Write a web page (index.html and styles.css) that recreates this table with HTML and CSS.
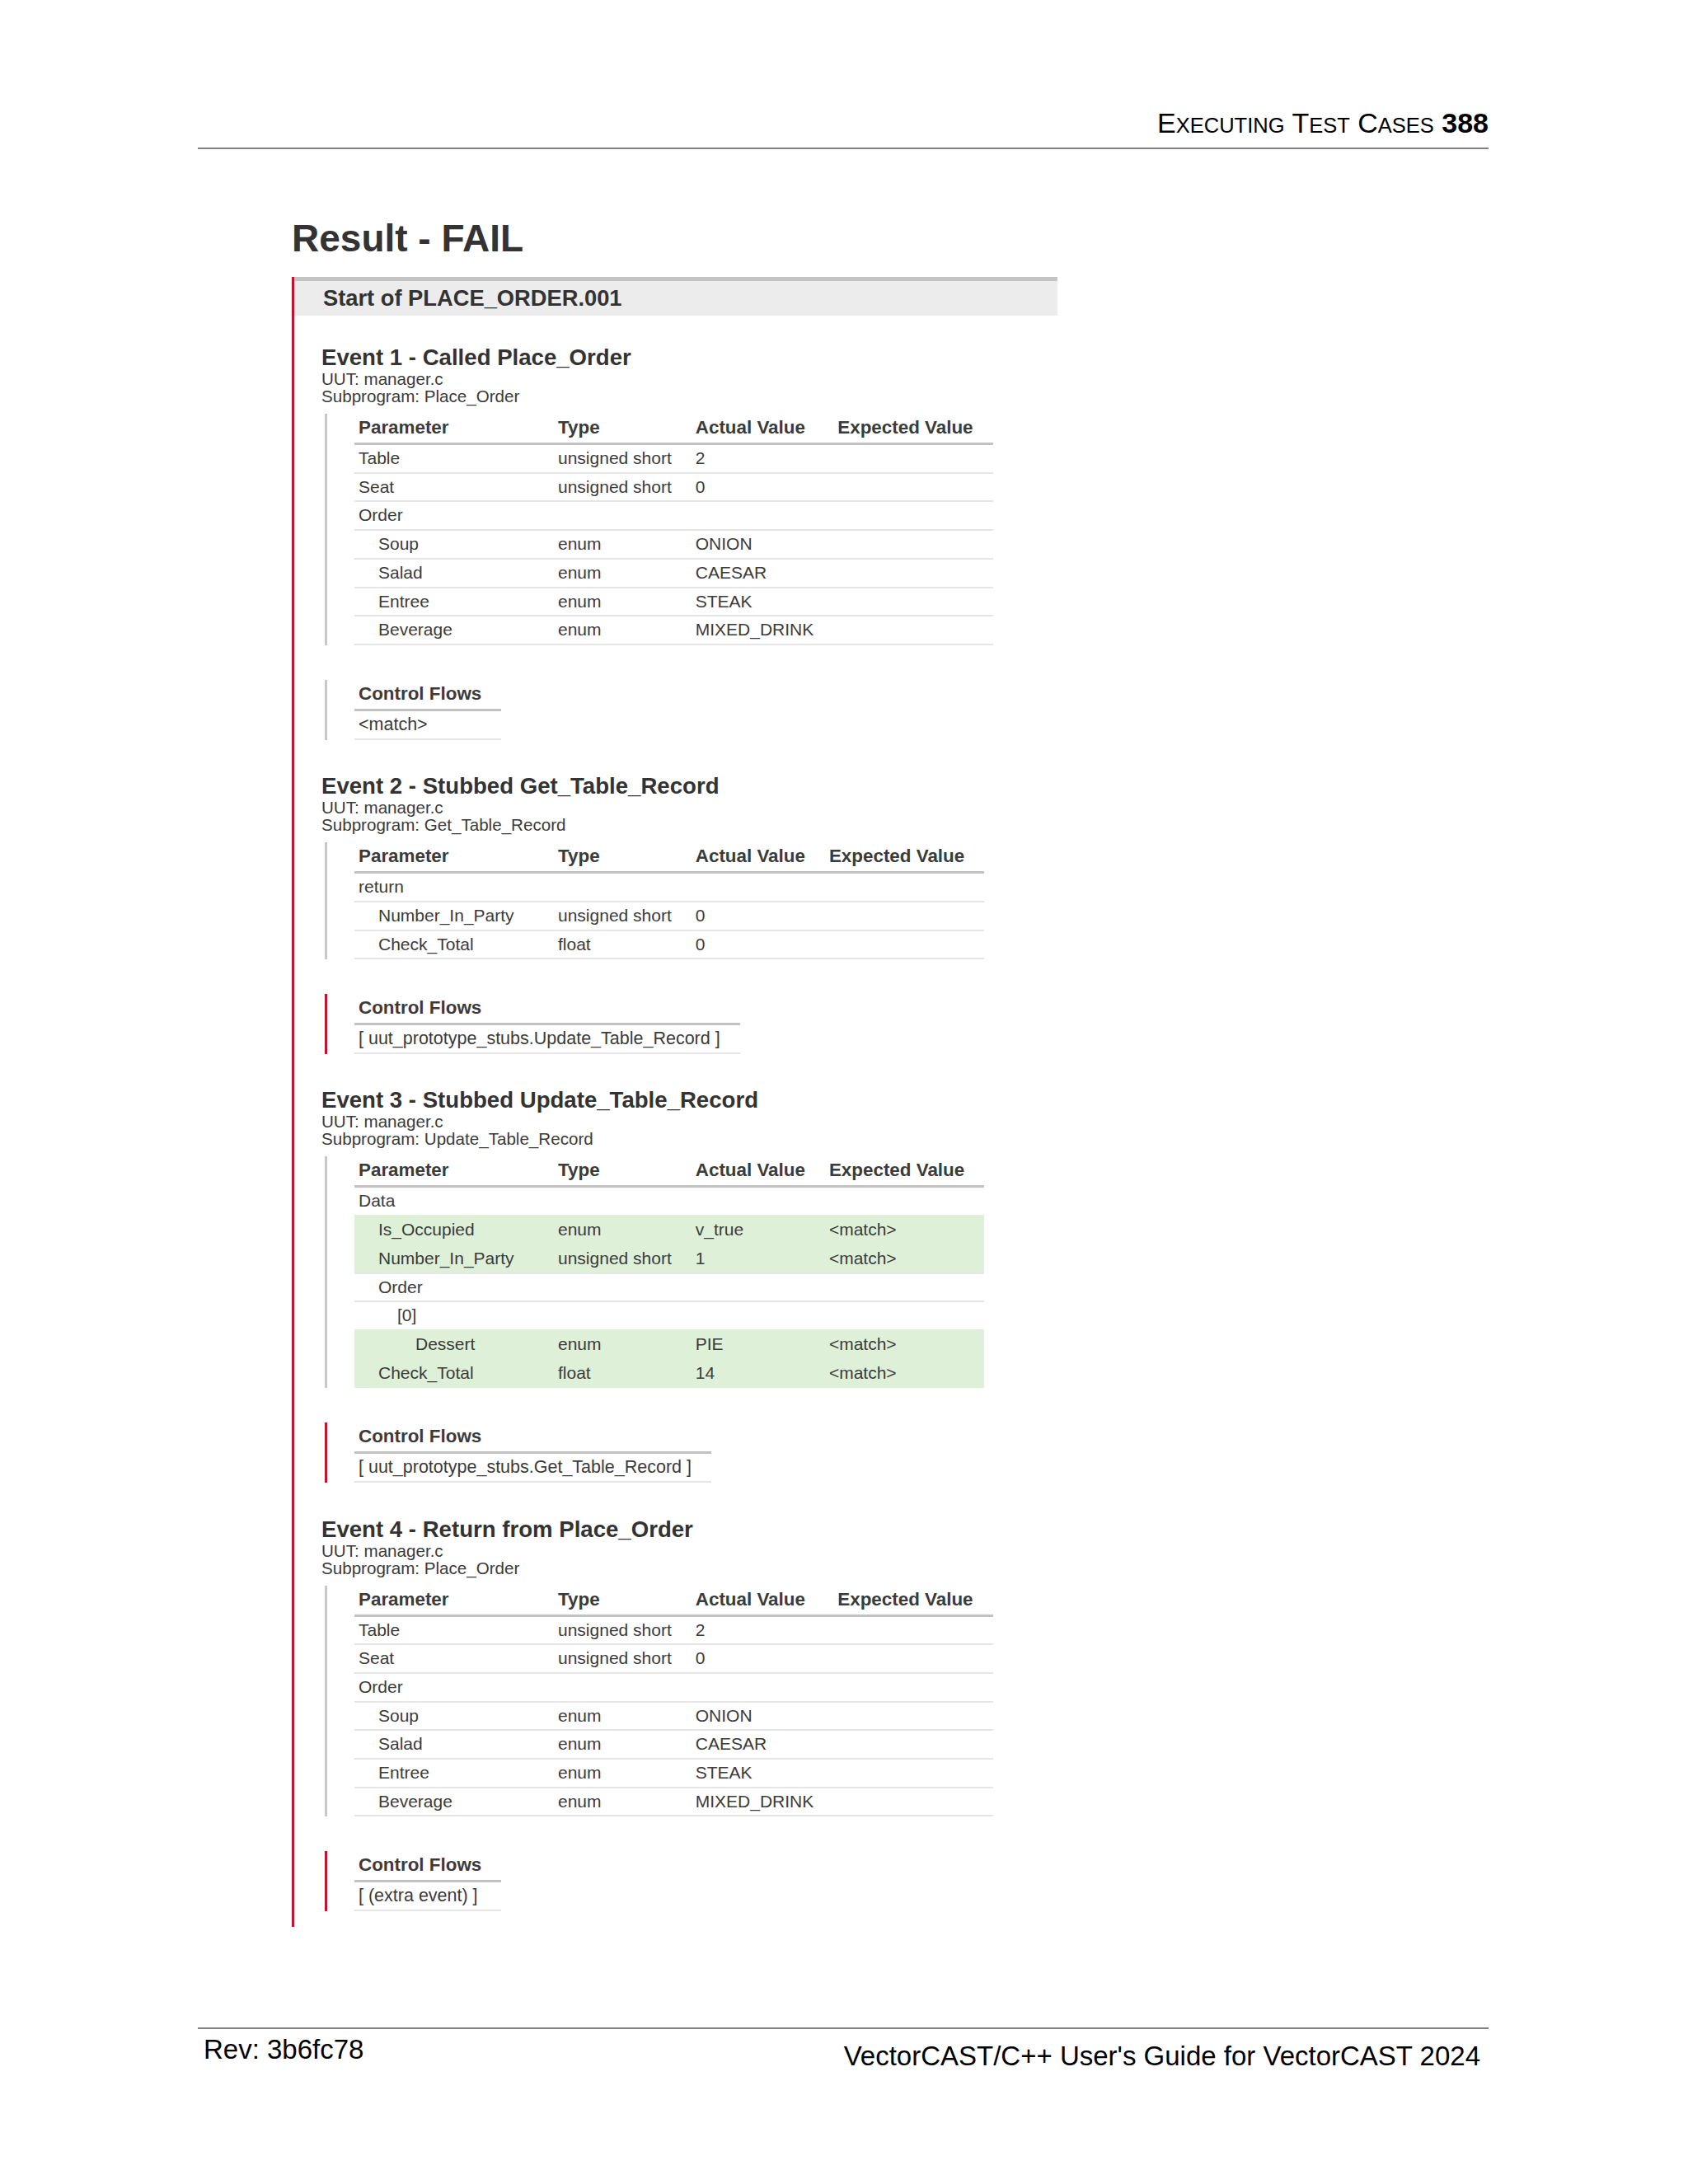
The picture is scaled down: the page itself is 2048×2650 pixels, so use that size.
FILE: index.html
```html
<!DOCTYPE html>
<html lang="en">
<head>
<meta charset="utf-8">
<title>Executing Test Cases 388</title>
<link rel="stylesheet" href="styles.css">
</head>
<body>
<div class="page">
  <header class="running-head"><span class="big">E</span><span class="sc">XECUTING</span> <span class="big">T</span><span class="sc">EST</span> <span class="big">C</span><span class="sc">ASES</span> <b>388</b></header>

  <main class="report">
    <h1 class="result">Result - FAIL</h1>

    <section class="testcase">
      <div class="tc-title">Start of PLACE_ORDER.001</div>

      <div class="event">
        <h2>Event 1 - Called Place_Order</h2>
        <div class="meta">UUT: manager.c</div>
        <div class="meta">Subprogram: Place_Order</div>
        <div class="tbl-wrap">
          <table class="params">
            <thead><tr><th class="c-param">Parameter</th><th>Type</th><th>Actual Value</th><th>Expected Value</th></tr></thead>
            <tbody>
              <tr><td>Table</td><td>unsigned short</td><td>2</td><td></td></tr>
              <tr><td>Seat</td><td>unsigned short</td><td>0</td><td></td></tr>
              <tr><td>Order</td><td></td><td></td><td></td></tr>
              <tr class="l1"><td>Soup</td><td>enum</td><td>ONION</td><td></td></tr>
              <tr class="l1"><td>Salad</td><td>enum</td><td>CAESAR</td><td></td></tr>
              <tr class="l1"><td>Entree</td><td>enum</td><td>STEAK</td><td></td></tr>
              <tr class="l1"><td>Beverage</td><td>enum</td><td>MIXED_DRINK</td><td></td></tr>
            </tbody>
          </table>
        </div>
        <div class="tbl-wrap cf">
          <table class="flows">
            <thead><tr><th>Control Flows</th></tr></thead>
            <tbody><tr><td>&lt;match&gt;</td></tr></tbody>
          </table>
        </div>
      </div>

      <div class="event">
        <h2>Event 2 - Stubbed Get_Table_Record</h2>
        <div class="meta">UUT: manager.c</div>
        <div class="meta">Subprogram: Get_Table_Record</div>
        <div class="tbl-wrap">
          <table class="params">
            <thead><tr><th class="c-param">Parameter</th><th>Type</th><th>Actual Value</th><th>Expected Value</th></tr></thead>
            <tbody>
              <tr><td>return</td><td></td><td></td><td></td></tr>
              <tr class="l1"><td>Number_In_Party</td><td>unsigned short</td><td>0</td><td></td></tr>
              <tr class="l1"><td>Check_Total</td><td>float</td><td>0</td><td></td></tr>
            </tbody>
          </table>
        </div>
        <div class="tbl-wrap cf bad">
          <table class="flows">
            <thead><tr><th>Control Flows</th></tr></thead>
            <tbody><tr><td>[ uut_prototype_stubs.Update_Table_Record ]</td></tr></tbody>
          </table>
        </div>
      </div>

      <div class="event">
        <h2>Event 3 - Stubbed Update_Table_Record</h2>
        <div class="meta">UUT: manager.c</div>
        <div class="meta">Subprogram: Update_Table_Record</div>
        <div class="tbl-wrap">
          <table class="params">
            <thead><tr><th class="c-param">Parameter</th><th>Type</th><th>Actual Value</th><th>Expected Value</th></tr></thead>
            <tbody>
              <tr><td>Data</td><td></td><td></td><td></td></tr>
              <tr class="l1 ok"><td>Is_Occupied</td><td>enum</td><td>v_true</td><td>&lt;match&gt;</td></tr>
              <tr class="l1 ok"><td>Number_In_Party</td><td>unsigned short</td><td>1</td><td>&lt;match&gt;</td></tr>
              <tr class="l1"><td>Order</td><td></td><td></td><td></td></tr>
              <tr class="l2"><td>[0]</td><td></td><td></td><td></td></tr>
              <tr class="l3 ok"><td>Dessert</td><td>enum</td><td>PIE</td><td>&lt;match&gt;</td></tr>
              <tr class="l1 ok"><td>Check_Total</td><td>float</td><td>14</td><td>&lt;match&gt;</td></tr>
            </tbody>
          </table>
        </div>
        <div class="tbl-wrap cf bad">
          <table class="flows">
            <thead><tr><th>Control Flows</th></tr></thead>
            <tbody><tr><td>[ uut_prototype_stubs.Get_Table_Record ]</td></tr></tbody>
          </table>
        </div>
      </div>

      <div class="event">
        <h2>Event 4 - Return from Place_Order</h2>
        <div class="meta">UUT: manager.c</div>
        <div class="meta">Subprogram: Place_Order</div>
        <div class="tbl-wrap">
          <table class="params">
            <thead><tr><th class="c-param">Parameter</th><th>Type</th><th>Actual Value</th><th>Expected Value</th></tr></thead>
            <tbody>
              <tr><td>Table</td><td>unsigned short</td><td>2</td><td></td></tr>
              <tr><td>Seat</td><td>unsigned short</td><td>0</td><td></td></tr>
              <tr><td>Order</td><td></td><td></td><td></td></tr>
              <tr class="l1"><td>Soup</td><td>enum</td><td>ONION</td><td></td></tr>
              <tr class="l1"><td>Salad</td><td>enum</td><td>CAESAR</td><td></td></tr>
              <tr class="l1"><td>Entree</td><td>enum</td><td>STEAK</td><td></td></tr>
              <tr class="l1"><td>Beverage</td><td>enum</td><td>MIXED_DRINK</td><td></td></tr>
            </tbody>
          </table>
        </div>
        <div class="tbl-wrap cf bad">
          <table class="flows">
            <thead><tr><th>Control Flows</th></tr></thead>
            <tbody><tr><td>[ (extra event) ]</td></tr></tbody>
          </table>
        </div>
      </div>
    </section>
  </main>

  <footer class="page-foot">
    <span class="rev">Rev: 3b6fc78</span>
    <span class="guide">VectorCAST/C++ User's Guide for VectorCAST 2024</span>
  </footer>
</div>
</body>
</html>
```

FILE: styles.css
```css
* {
  box-sizing: border-box;
}

body {
  margin: 0;
  background: #ffffff;
  font-family: "Liberation Sans", Arial, sans-serif;
  color: #000000;
}

.page {
  width: 1566px;
  margin-left: 240px;
}

/* running header */
.running-head {
  padding-top: 129px;
  padding-bottom: 10px;
  padding-right: 0;
  line-height: 40px;
  font-size: 34px;
  text-align: right;
  border-bottom: 2px solid #808080;
  color: #000000;
}

.running-head .sc {
  font-size: 25.5px;
  line-height: 1;
}

.running-head b {
  font-weight: bold;
}

/* report body */
.report {
  margin-left: 114px;
}

.result {
  margin: 83px 0 0;
  font-size: 46px;
  line-height: 51px;
  font-weight: bold;
  color: #333333;
}

.testcase {
  margin-top: 21px;
  width: 929px;
  border-left: 3px solid #c8102e;
  padding-bottom: 19px;
}

.tc-title {
  height: 47px;
  border-top: 5px solid #c4c4c4;
  background: #ececec;
  padding-left: 35px;
  line-height: 42px;
  font-size: 27.3px;
  font-weight: bold;
  color: #333333;
}

.event {
  padding-left: 33px;
  margin-top: 40.5px;
}

.tc-title + .event {
  margin-top: 35px;
}

.event h2 {
  margin: 0;
  font-size: 27.6px;
  line-height: 31px;
  font-weight: bold;
  color: #333333;
}

.meta {
  font-size: 20.6px;
  line-height: 21px;
  color: #3b3b3b;
}

.tbl-wrap {
  margin-top: 11px;
  margin-left: 4px;
  padding-left: 33px;
  border-left: 3px solid #c8c8c8;
}

.tbl-wrap.cf {
  margin-top: 42px;
}

.tbl-wrap.bad {
  border-left-color: #c8102e;
}

table {
  border-collapse: separate;
  border-spacing: 0;
  font-size: 21px;
  color: #3b3b3b;
}

th,
td {
  box-sizing: content-box;
  padding: 0 24px 0 5px;
  text-align: left;
  white-space: nowrap;
}

th {
  font-size: 22.4px;
  font-weight: bold;
  line-height: 33px;
  padding-bottom: 2px;
  border-bottom: 3px solid #c2c2c2;
  color: #3b3b3b;
}

.params th.c-param {
  width: 213px;
}

td {
  line-height: 32.7px;
  border-top: 2px solid #e6e6e6;
}

.flows td {
  font-size: 21.5px;
}

tbody tr:first-child td {
  border-top: none;
}

tbody tr:last-child td {
  border-bottom: 2px solid #e6e6e6;
}

tr.l1 td:first-child {
  padding-left: 29px;
}

tr.l2 td:first-child {
  padding-left: 52px;
}

tr.l3 td:first-child {
  padding-left: 74px;
}

tr.ok td {
  background: #dff0d8;
  border-top-color: #dff0d8;
}

tbody tr.ok:last-child td {
  border-bottom-color: #dff0d8;
}

/* footer */
.page-foot {
  margin-top: 122px;
  border-top: 2px solid #808080;
  display: flex;
  justify-content: space-between;
  align-items: flex-start;
  padding: 6px 10px 0 7px;
  font-size: 33px;
  line-height: 38px;
  color: #000000;
}

.page-foot .guide {
  margin-top: 8px;
}
```
